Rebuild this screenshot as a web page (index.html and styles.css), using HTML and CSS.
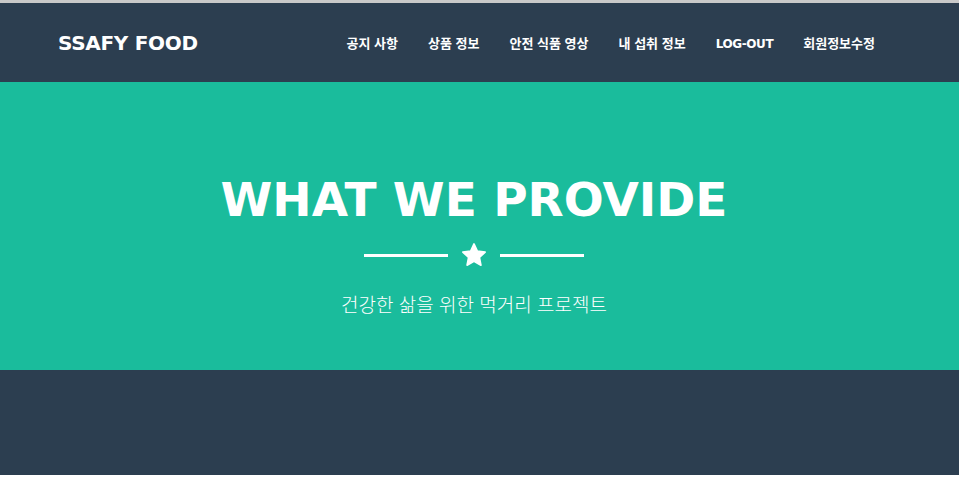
FILE: index.html
```html
<!DOCTYPE html>
<html lang="ko">
<head>
<meta charset="utf-8">
<title>SSAFY FOOD</title>
<link rel="stylesheet" href="styles.css">
</head>
<body>
<div class="topline"></div>
<nav class="navbar">
  <a class="brand" href="#">SSAFY FOOD</a>
  <ul class="menu">
    <li><a href="#">공지 사항</a></li>
    <li><a href="#">상품 정보</a></li>
    <li><a href="#">안전 식품 영상</a></li>
    <li><a href="#">내 섭취 정보</a></li>
    <li><a href="#" class="latin">LOG-OUT</a></li>
    <li><a href="#">회원정보수정</a></li>
  </ul>
</nav>
<header class="hero">
  <h1 class="title">WHAT WE PROVIDE</h1>
  <div class="divider">
    <span class="line"></span>
    <svg class="star" viewBox="0 0 24 24" width="26" height="26"><path fill="#fff" stroke="#fff" stroke-width="1.5" stroke-linejoin="round" d="M12 1.8l3.1 6.6 7.2.9-5.3 5 1.4 7.1L12 17.9l-6.4 3.5 1.4-7.1-5.3-5 7.2-.9z"/></svg>
    <span class="line"></span>
  </div>
  <p class="subtitle">건강한 삶을 위한 먹거리 프로젝트</p>
</header>
<footer class="footer"></footer>
</body>
</html>
```
FILE: styles.css
```css
html, body {
  margin: 0;
  padding: 0;
  background: #fff;
}
body {
  font-family: "DejaVu Sans", "Noto Sans CJK KR", sans-serif;
}
.topline {
  height: 3px;
  background: #c9c9c9;
}
.navbar {
  height: 79px;
  background: #2c3e50;
  display: flex;
  align-items: center;
  justify-content: space-between;
  padding: 0 84px 0 58px;
  box-sizing: border-box;
}
.brand {
  color: #fff;
  text-decoration: none;
  font-family: "DejaVu Sans", sans-serif;
  font-weight: bold;
  font-size: 20px;
  letter-spacing: -0.3px;
}
.menu {
  list-style: none;
  margin: 0;
  padding: 0;
  display: flex;
  gap: 30px;
}
.menu a {
  color: #fff;
  text-decoration: none;
  font-family: "Noto Sans CJK KR", sans-serif;
  font-weight: bold;
  font-size: 13px;
}
.menu a.latin {
  font-family: "DejaVu Sans", sans-serif;
  font-size: 12px;
  letter-spacing: -0.4px;
}
.hero {
  height: 288px;
  background: #1abc9c;
  display: flex;
  flex-direction: column;
  align-items: center;
  padding: 91px 11px 0 0;
  box-sizing: border-box;
  color: #fff;
}
.title {
  margin: 0;
  font-family: "DejaVu Sans", sans-serif;
  font-weight: bold;
  font-size: 47px;
  line-height: 54px;
}
.divider {
  display: flex;
  align-items: center;
  gap: 13px;
  margin-top: 15px;
}
.line {
  width: 84px;
  height: 3px;
  background: #fff;
  display: block;
}
.star {
  display: block;
}
.subtitle {
  margin: 22px 0 0;
  font-family: "Noto Sans CJK KR", sans-serif;
  font-weight: 300;
  font-size: 19px;
}
.footer {
  height: 105px;
  background: #2c3e50;
}
```
